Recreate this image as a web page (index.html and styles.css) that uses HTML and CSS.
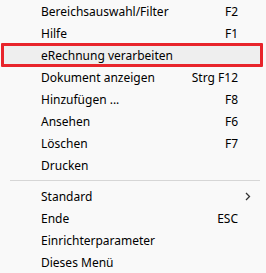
FILE: index.html
```html
<!DOCTYPE html>
<html lang="de">
<head>
    <meta charset="UTF-8">
    <title>Kontextmenü</title>
    <link rel="stylesheet" href="styles.css">
</head>
<body>
    <div class="menu">
        <div class="item"><span class="label">Bereichsauswahl/Filter</span><span class="key">F2</span><span class="sub"></span></div>
        <div class="item"><span class="label">Hilfe</span><span class="key">F1</span><span class="sub"></span></div>
        <div class="item selected"><span class="label">eRechnung verarbeiten</span><span class="key"></span><span class="sub"></span></div>
        <div class="item"><span class="label">Dokument anzeigen</span><span class="key">Strg F12</span><span class="sub"></span></div>
        <div class="item"><span class="label">Hinzufügen ...</span><span class="key">F8</span><span class="sub"></span></div>
        <div class="item"><span class="label">Ansehen</span><span class="key">F6</span><span class="sub"></span></div>
        <div class="item"><span class="label">Löschen</span><span class="key">F7</span><span class="sub"></span></div>
        <div class="item"><span class="label">Drucken</span><span class="key"></span><span class="sub"></span></div>
        <div class="separator"></div>
        <div class="item"><span class="label">Standard</span><span class="key"></span><span class="sub">
            <svg width="6" height="9" viewBox="0 0 6 9"><path d="M1 1 L4.5 4.5 L1 8" fill="none" stroke="#333" stroke-width="1.3"/></svg>
        </span></div>
        <div class="item"><span class="label">Ende</span><span class="key">ESC</span><span class="sub"></span></div>
        <div class="item"><span class="label">Einrichterparameter</span><span class="key"></span><span class="sub"></span></div>
        <div class="item"><span class="label">Dieses Menü</span><span class="key"></span><span class="sub"></span></div>
    </div>
</body>
</html>
```

FILE: styles.css
```css
body, html {
    margin: 0;
    background-color: #f9f9f9;
    font-family: "Noto Sans", "Open Sans", sans-serif;
    font-size: 12px;
    color: #000;
}
.menu {
    width: 266px;
    padding-left: 2px;
    box-sizing: border-box;
}
.item {
    display: grid;
    grid-template-columns: 1fr auto 28px;
    align-items: center;
    height: 22px;
    padding-left: 39px;
    box-sizing: border-box;
}
.label {
    white-space: nowrap;
}
.key {
    text-align: right;
}
.sub {
    display: flex;
    align-items: center;
    padding-left: 7px;
}
.item.selected {
    margin: -1px 3px -1px -1px;
    padding-left: 37px;
    height: 24px;
    background-color: #eeeeee;
    border: 3px solid #e8242b;
    border-radius: 1px;
}
.separator {
    height: 1px;
    margin: 4px 6px 4px 8px;
    background-color: #d6d6d6;
}
```
